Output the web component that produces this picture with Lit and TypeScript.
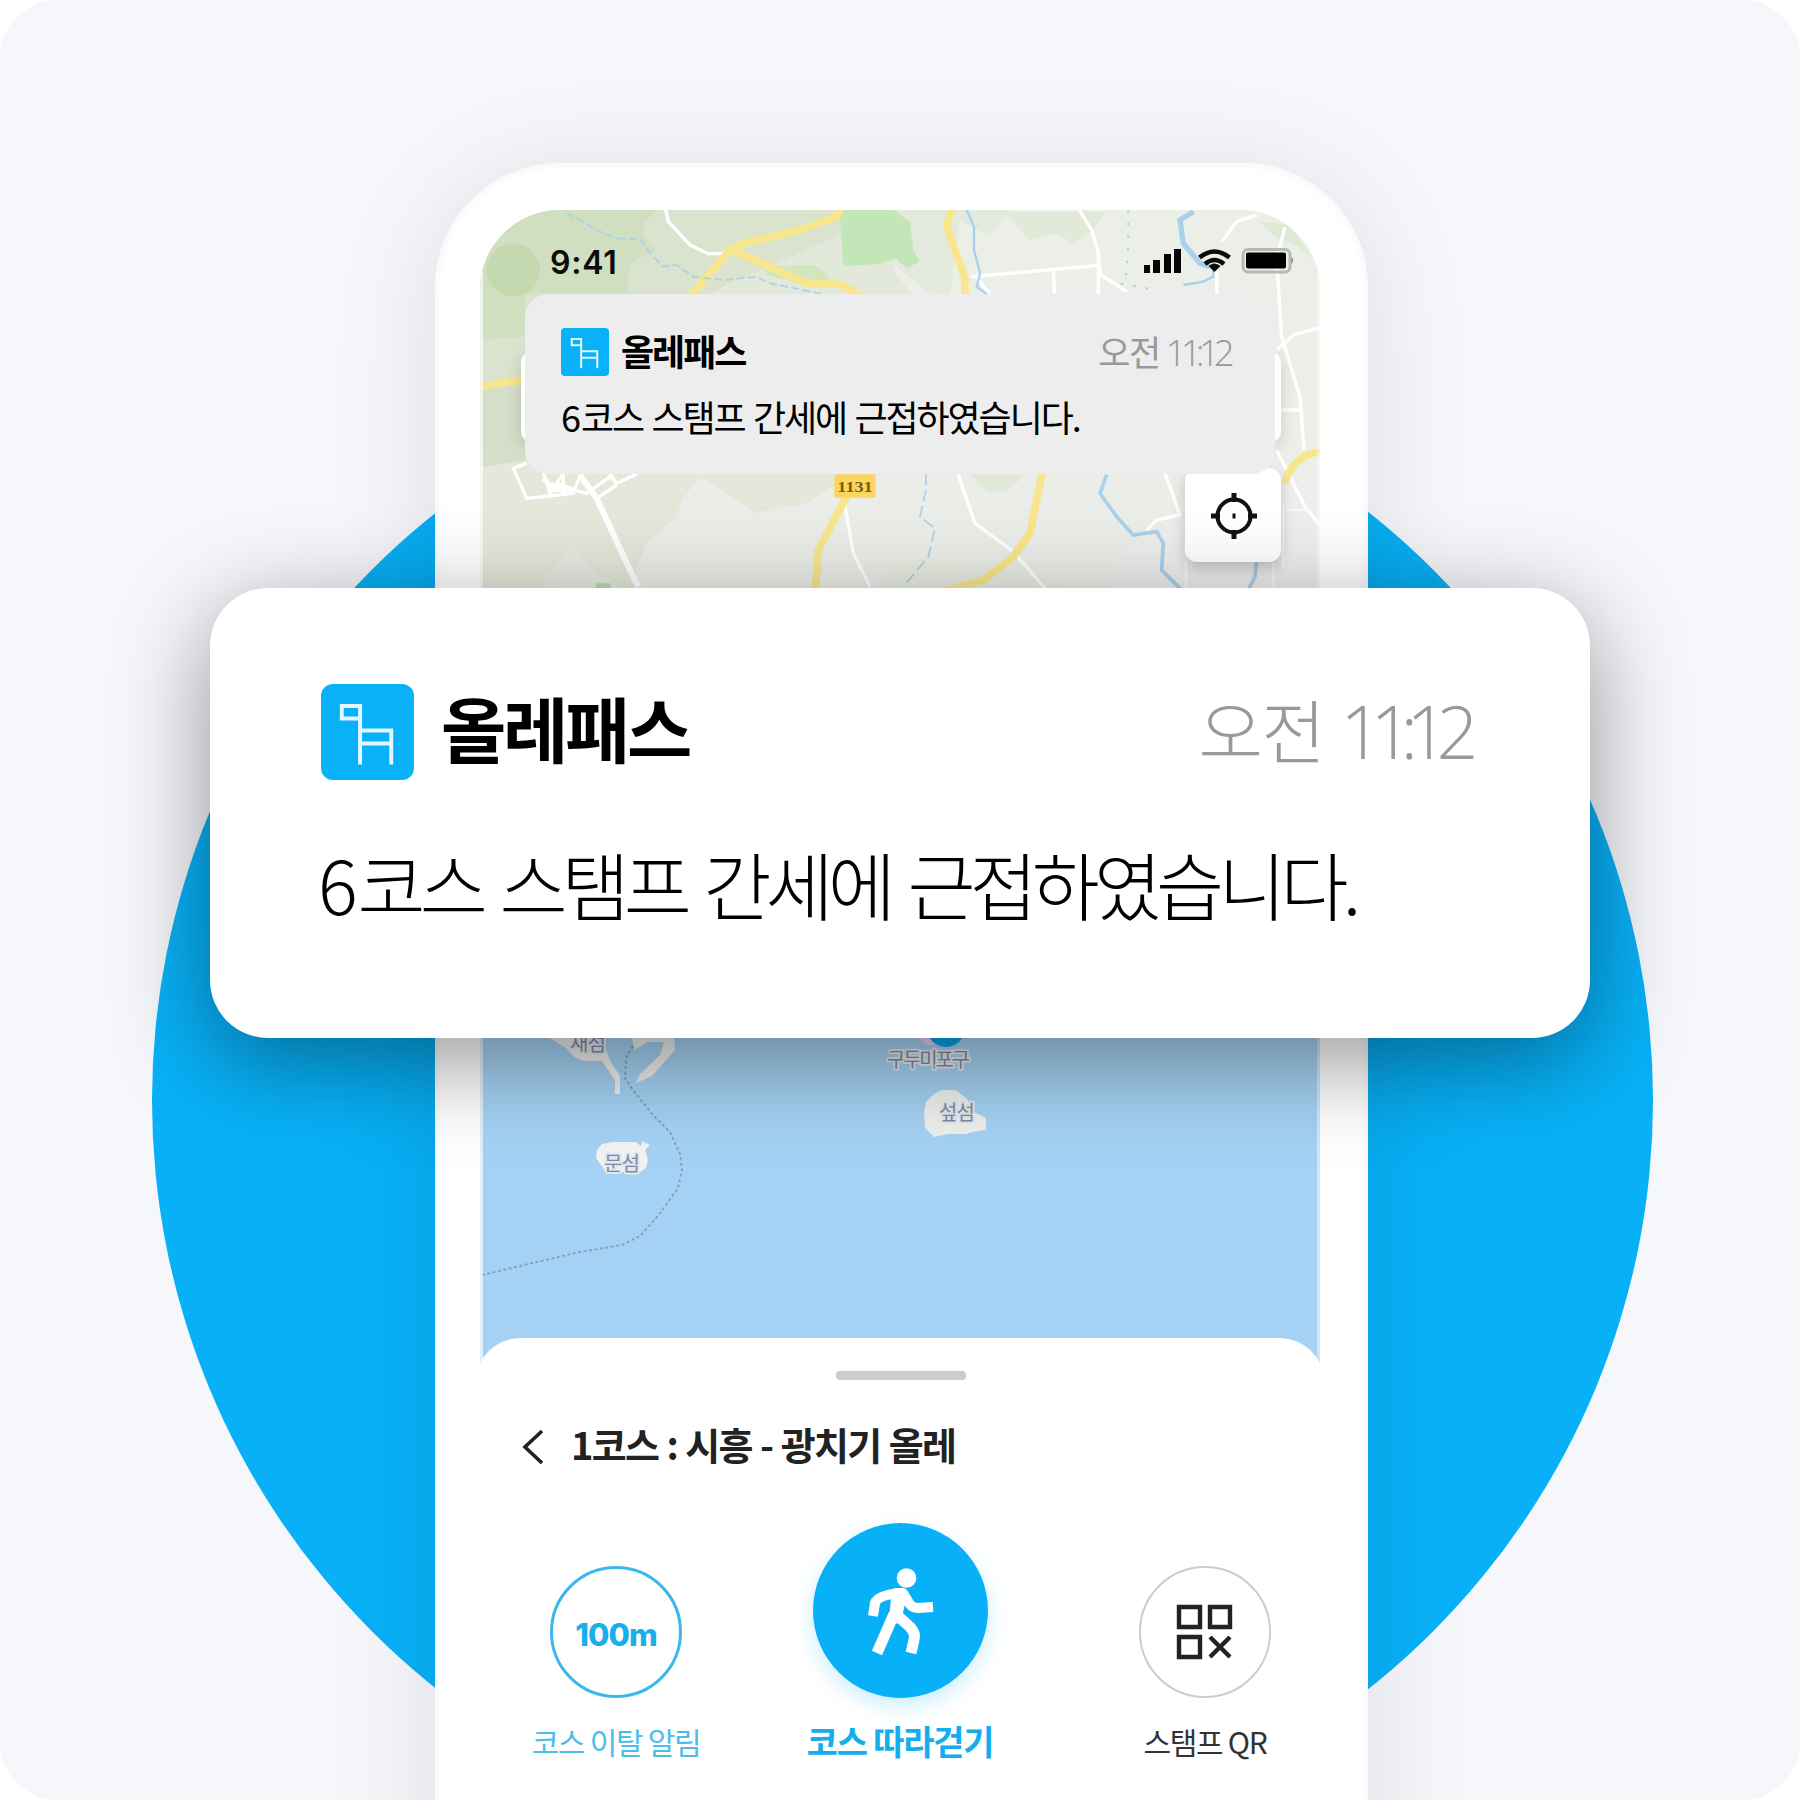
import { LitElement, html, css, svg } from "lit";
import { customElement, property } from "lit/decorators.js";

const chair = html`<svg viewBox="0 0 94 96" preserveAspectRatio="none" fill="none" stroke="#e2f6ff" stroke-width="4">
  <path d="M40 34.500H21V22H40M39.500 20V80.500M39.500 46.500H71V80.500M39.500 59.500H71" />
</svg>`;

@customElement("olle-notice")
export class OlleNotice extends LitElement {
  @property() name = "";
  @property() half = "";
  @property() time = "";
  @property() message = "";

  static styles = css`
    :host { display: block; box-sizing: border-box; color: #000; white-space: nowrap; }
    .head { display: flex; align-items: flex-start; height: var(--icon-h); }
    .icon { width: var(--icon-w); height: var(--icon-h); border-radius: var(--icon-r); background: #08b1f8; flex: none; }
    .icon svg { display: block; width: 100%; height: 100%; }
    .name { font-weight: 700; font-size: var(--name-size); letter-spacing: var(--name-ls); margin: var(--name-top) 0 0 var(--name-gap); line-height: 1; }
    .time { display: flex; align-items: baseline; gap: var(--time-gap); margin: var(--time-top) 0 0 auto; color: #999; font-weight: var(--light); font-size: var(--time-size); letter-spacing: var(--time-ls); line-height: 1; }
    .digits { font-family: "Open Sans", sans-serif; font-weight: 300; font-size: 1.05em; letter-spacing: -.16em; margin-right: .14em; }
    .message { margin: var(--msg-gap) 0 0 var(--msg-left); font-weight: var(--light); font-size: var(--msg-size); letter-spacing: var(--msg-ls); word-spacing: var(--msg-ws); line-height: 1; }
    .message::first-letter { letter-spacing: 0; }
  `;

  render() {
    return html`
      <div class="head">
        <div class="icon">${chair}</div>
        <div class="name">${this.name}</div>
        <div class="time"><span>${this.half}</span><span class="digits">${this.time}</span></div>
      </div>
      <div class="message">${this.message}</div>
    `;
  }
}

@customElement("olle-map")
export class OlleMap extends LitElement {
  static styles = css`
    :host { display: block; }
    svg { display: block; width: 100%; height: 100%; }
    .place { font-family: "Noto Sans CJK KR", sans-serif; font-size: 20px; fill: #7d8ba3; stroke: #e4e8ee; stroke-width: 4px; paint-order: stroke; stroke-linejoin: round; letter-spacing: -1px; }
    .road { font-family: "Liberation Serif", serif; font-weight: 700; font-size: 44px; fill: #7a5c10; }
  `;

  // Land tiles and roads use a grid three times finer than the screen.
  private land() {
    return svg`
      <g transform="translate(430 150) scale(.33333)">
        <rect x="140" y="170" width="2540" height="1500" fill="#e3e8da" />
        <path d="M140 170H1260L1240 300L1000 400L800 460H600L300 520V920L140 950Z" fill="#d9e3cd" />
        <path d="M140 170H690L640 220V260L680 300L600 340L590 430H285V560L150 570Z" fill="#cfdfbf" />
        <circle cx="250" cy="360" r="80" fill="#c4d9b0" />
        <path d="M150 715L285 700V930L160 950Z" fill="#d4dec8" />
        <path d="M900 400L1240 250L1260 300L1420 420L1430 450H800Z" fill="#e2e8da" />
        <path d="M1000 350L1150 345L1190 370L1200 405L1110 400L1010 375Z" fill="#d0e7bd" />
        <path d="M1420 180H2680V1000H1500L1450 440L1390 360Z" fill="#ebefe7" />
        <path d="M1410 180H1740L1680 260L1590 210L1560 430H1500L1400 350Z" fill="#e3e9dc" />
        <path d="M1720 185H2030L1990 240L1930 285L1880 250L1800 270Z" fill="#e3e9d9" />
        <path d="M2490 215L2580 225L2650 330L2600 285L2540 265Z" fill="#dfe8d2" />
        <path d="M1228 170H1380L1440 215L1450 300L1468 335L1430 355L1395 325L1350 342L1240 348Z" fill="#c2e6b7" />
        <path d="M620 1250L650 1180L740 1100L755 1050L810 980L880 1025L980 1090L1060 1065L1110 1070L1210 1010L1400 960H2680V1400H600Z" fill="#ebeee8" />
        <path d="M1620 972H1780Q1740 1040 1670 1025Z" fill="#e2e8d8" />
        <path d="M330 1310L430 1180L470 1240L510 1280L600 1320Z" fill="#e8ebe2" />
        <path d="M500 1300H540L550 1340H490Z" fill="#b9deae" />
        <path d="M2050 1340V1220L2110 1170L2240 1140L2270 970L2540 1000L2680 930V1340Z" fill="#eeeeed" />
        <path d="M1340 1320L1420 1230L1640 1240L2050 1340Z" fill="#e9ede2" />
        <g fill="none" stroke="#fff" stroke-width="10" stroke-linejoin="round">
          <path d="M705 170L715 215L780 285L835 311H890" />
          <path d="M1945 175L1985 240L2005 310L2012 375L2090 425M2005 300V432M1625 380L2008 346M1870 355L1873 430M1640 385L1680 430" />
          <path d="M2375 275L2420 215L2480 195M2565 230L2540 330L2555 560L2570 610L2610 740L2622 900M2560 585L2590 555L2680 530M2540 600L2562 580M2550 780H2610M2540 900L2625 1070L2680 1140M2360 330V440" />
          <path d="M290 940L250 955L290 1045L430 1030L450 975M340 970L360 1030L400 970V1030M350 1000L470 1030L540 980L560 1000L620 972M500 1045L560 1005M540 970L560 1000" />
          <path d="M340 985L375 1020H440M375 1000L430 1020" stroke-width="14" />
          <path d="M450 975L500 1045L600 1260L625 1310" stroke-width="18" />
          <path d="M1240 1040L1270 1210L1320 1310M1585 975L1635 1120L1750 1205L1845 1315M2205 970L2250 1095L2180 1110L2150 1140" />
          <path d="M2268 1110V1320M2530 1240V1330M2560 1060V1250M2570 1080H2640" stroke-width="8" stroke="#f8f8f8" />
        </g>
        <g fill="none" stroke="#f8e68e" stroke-width="23" stroke-linejoin="round">
          <path d="M1235 170L1220 200L1110 240L940 280L900 300L770 450M905 300L1130 400L1230 403L1310 445" />
          <path d="M1567 165L1550 230L1605 385V450M1838 960L1800 1150L1750 1220L1660 1290L1520 1330M2565 1000Q2590 905 2690 905" />
          <path d="M150 710L290 688M1250 1040L1165 1200L1155 1340" />
        </g>
        <g fill="none" stroke="#a9d0ec" stroke-width="7">
          <path d="M410 190L450 210L500 240L560 265L630 268L660 310L700 350L740 345L790 380L880 390L980 380L1020 400L1180 432" stroke-dasharray="24 10" stroke-width="5" />
          <path d="M1610 180L1632 230V300L1650 370L1640 410L1680 440" />
          <path d="M2290 185L2250 210L2260 280L2310 340L2340 350" stroke-width="16" />
          <path d="M2260 405L2320 395L2350 380V340" />
          <path d="M2095 180V270L2090 370L2070 400L2180 420" stroke-dasharray="8 30" stroke-width="6" />
          <path d="M2030 975L2010 1030L2060 1100L2110 1155L2180 1145L2200 1180L2195 1260L2250 1315M2480 1230L2475 1280L2450 1330" stroke-width="11" />
          <path d="M1488 970V1020L1470 1100L1515 1135L1495 1220L1420 1310" stroke-dasharray="35 14" stroke-width="5" />
        </g>
        <rect x="1213" y="973" width="124" height="70" rx="8" fill="#fbd560" />
        <text class="road" x="1222" y="1025" textLength="106" lengthAdjust="spacingAndGlyphs">1131</text>
      </g>`;
  }

  private sea() {
    return svg`
      <rect x="480" y="800" width="840" height="600" fill="#a5d2f4" />
      <path d="M548 1037L566 1048L574 1057L584 1061H602L615 1080V1094H620V1076L611 1062L606 1050L606 1030Z" fill="#edefed" />
      <path d="M631 1030L634 1050L648 1042L664 1042L660 1055L640 1074L636 1083L652 1076L675 1050L674 1030Z" fill="#edefed" />
      <path d="M597 1150L602 1144L612 1142H636L641 1146L642 1141L650 1145L645 1150L648 1160L646 1168L640 1172H606L596 1158Z" fill="#f2f3f2" />
      <path d="M924 1112L926 1102L934 1094L942 1090H956L968 1100L974 1112L986 1118V1130L972 1132L966 1134H948L934 1137L925 1128Z" fill="#eff1ef" />
      <path d="M633 1046L626 1058L625 1078L630 1086L652 1114L670 1132L680 1154L682 1170L678 1188L658 1216L640 1236L622 1245L580 1252L520 1266L482 1275" fill="none" stroke="#7fa0c4" stroke-width="1.800" stroke-dasharray="3 2.500" />
      <circle cx="931" cy="1033" r="12" fill="#e4d6e6" />
      <circle cx="946" cy="1028" r="19" fill="#08a5ea" />
      <text class="place" x="570" y="1051">새섬</text>
      <text class="place" x="604" y="1171">문섬</text>
      <text class="place" x="939" y="1120">섶섬</text>
      <text class="place" x="887" y="1067" textLength="82">구두미포구</text>`;
  }

  render() {
    return html`<svg viewBox="480 210 840 1190">
      ${this.land()} ${this.sea()}
      <rect x="480" y="210" width="3" height="1190" fill="#fff" fill-opacity=".65" />
      <rect x="1317" y="210" width="3" height="1190" fill="#fff" fill-opacity=".45" />
    </svg>`;
  }
}

@customElement("app-root")
export class AppRoot extends LitElement {
  static styles = css`
    :host { display: block; background: #fff; font-family: "Noto Sans CJK KR", "Noto Sans", sans-serif; }
    * { box-sizing: border-box; }
    .board { position: relative; width: 1800px; height: 1800px; overflow: hidden; border-radius: 58px; background: #f5f7fb; display: flex; justify-content: center; align-items: flex-start; }
    .disc { position: absolute; left: 152px; top: 350px; width: 1501px; height: 1501px; border-radius: 50%; background: #08b1f7; }
    .phone { position: relative; width: 933px; height: 1900px; flex: none; margin: 163px 0 0 3px; padding: 47px 48px 0 45px; border-radius: 124px 124px 0 0; background: #fff; box-shadow: 0 14px 110px rgba(20, 20, 30, .11), inset 0 0 12px #f3f3f4; }
    .screen { position: relative; display: flex; flex-direction: column; width: 840px; height: 1590px; overflow: hidden; border-radius: 80px 80px 0 0; }
    .map { position: absolute; left: 0; top: 0; width: 840px; height: 1190px; }
    .status { position: relative; display: flex; align-items: center; height: 84px; padding: 18px 25px 0 70px; }
    .clock { font: 600 32px/1 Inter, sans-serif; letter-spacing: .8px; color: #0b0b0b; padding-top: 4px; }
    .signals { margin-left: auto; display: block; width: 152px; height: 26px; }
    .search { position: absolute; left: 41px; top: 142px; width: 760px; height: 90px; border-radius: 10px; background: #fff; box-shadow: 0 4px 16px rgba(0, 0, 0, .14); }
    .locate { position: absolute; left: 705px; top: 258px; width: 96px; height: 94px; border-radius: 12px; background: #fff; box-shadow: 0 6px 14px rgba(0, 0, 0, .2); display: grid; place-items: center; padding-top: 2px; }
    .small { position: relative; margin: 0 45px; height: 180px; padding: 34px 41px 0 36px; border-radius: 24px; background: #ededed;
      --icon-w: 48px; --icon-h: 48px; --icon-r: 4px; --name-size: 36px; --name-ls: -2px; --name-gap: 12px; --name-top: 4px; --light: 400; --time-size: 35px; --time-ls: -1.500px; --time-gap: 6px; --time-top: 5px; --msg-gap: 22px; --msg-left: 0px; --msg-size: 36px; --msg-ls: -2.100px; --msg-ws: 2.500px; }
    .sheet { position: relative; width: 850px; flex: none; height: 462px; margin: auto -5px 0; border-radius: 46px 46px 0 0; background: #fff; display: flex; flex-direction: column; align-items: center; padding-top: 33px; }
    .grip { width: 130px; height: 9px; border-radius: 4px; margin-left: 1px; background: #ccc; }
    .title { align-self: stretch; display: flex; align-items: center; gap: 27px; height: 40px; margin: 46px 0 0 46px; color: #222; font-size: 38px; font-weight: 700; letter-spacing: -1.700px; word-spacing: 1.300px; line-height: 1; white-space: nowrap; }
    .title span { padding-bottom: 4px; }
    .actions { align-self: stretch; margin: 57px 0 0; padding: 0 0 0 46px; display: flex; align-items: flex-end; }
    .action { display: flex; flex-direction: column; align-items: center; width: 190px; white-space: nowrap; color: #222; }
    .walk { margin: 0 115px 0 94px; }
    .ring { width: 132px; height: 132px; border-radius: 50%; border: 2px solid #ccc; display: grid; place-items: center; }
    .alert .ring { border: 3px solid #3bb7ec; color: #1aaeea; font: 800 31px/1 Inter, sans-serif; letter-spacing: -.900px; padding-top: 5px; }
    .walk .ring { width: 175px; height: 175px; border: 0; background: #08b1f7; box-shadow: 0 8px 20px rgba(8, 177, 247, .22); }
    .label { height: 36px; margin-top: 25px; margin-bottom: 1px; font-size: 30px; line-height: 36px; letter-spacing: -1.300px; }
    .alert .label { color: #4cbdec; }
    .walk .label { color: #14aeee; font-weight: 700; font-size: 34px; letter-spacing: -1.300px; }
    .qr .label { color: #333; }
    .big { position: absolute; left: 210px; top: 588px; width: 1380px; height: 450px; padding: 96px 113px 0 111px; border-radius: 58px; background: #fff; box-shadow: 0 24px 96px rgba(0, 0, 0, .41);
      --icon-w: 93px; --icon-h: 96px; --icon-r: 12px; --name-size: 71px; --name-ls: -3.300px; --name-gap: 27px; --name-top: 7px; --light: 300; --time-size: 70px; --time-ls: -1.500px; --time-gap: 16px; --time-top: 10px; --msg-gap: 66px; --msg-left: -3px; --msg-size: 74px; --msg-ls: -5.900px; --msg-ws: 7px; }
  `;

  private signals() {
    return html`<svg class="signals" viewBox="1142 248 152 26">
      <path d="M1143 265h6v8h-6zM1152 260h7v13h-7zM1163 254h7v19h-7zM1173 249h7v24h-7z" fill="#050505" />
      <g fill="none" stroke="#0a0a0a" stroke-width="4.5">
        <path d="M1198.500 257.500q15-12 30 0M1204 264q9.500-8 19 0" />
      </g>
      <path d="M1213.500 272l-6-6q6-5 12 0z" fill="#0a0a0a" />
      <rect x="1242" y="249.500" width="47" height="22.500" rx="5" fill="none" stroke="#b4bab2" stroke-width="3" />
      <rect x="1245" y="252.500" width="40" height="16" rx="2" />
      <path d="M1290.500 257q3 3.500 0 7z" fill="#777" />
    </svg>`;
  }

  render() {
    const name = "올레패스";
    const half = "오전";
    const time = "11:12";
    const message = "6코스 스탬프 간세에 근접하였습니다.";
    return html`<main class="board">
      <div class="disc"></div>
      <section class="phone">
        <div class="screen">
          <olle-map class="map"></olle-map>
          <div class="search"></div>
          <div class="locate">
            <svg width="48" height="48" viewBox="0 0 48 48" fill="none" stroke="#111" stroke-width="4">
              <circle cx="25" cy="24" r="16.500" />
              <path d="M25 1V10M25 38V47M2 24H11M39 24H48" stroke-width="5" />
              <path d="M25 21.500V26.500" stroke-width="3" />
            </svg>
          </div>
          <div class="status"><span class="clock">9:41</span>${this.signals()}</div>
          <olle-notice class="small" .name=${name} .half=${half} .time=${time} .message=${message}></olle-notice>
          <div class="sheet">
            <div class="grip"></div>
            <div class="title">
              <svg width="23" height="36" viewBox="0 0 23 36" fill="none" stroke="#222" stroke-width="3.6"><path d="M21 3L4 19L21 35" /></svg>
              <span>1코스 : 시흥 - 광치기 올레</span>
            </div>
            <div class="actions">
              <div class="action alert"><div class="ring">100m</div><div class="label">코스 이탈 알림</div></div>
              <div class="action walk">
                <div class="ring">
                  <svg width="68" height="90" viewBox="0 0 68 90" fill="none" stroke="#fff" stroke-linejoin="round">
                    <circle cx="40.500" cy="12" r="9.800" fill="#fff" stroke="none" />
                    <path d="M30 26.500L37 26.500L31 53L28 48Z" fill="#fff" stroke-width="9" />
                    <path d="M34 27Q12 29 9 37L7 50" stroke-width="10" />
                    <path d="M37 27L43 37Q46 42 52 42L67 41" stroke-width="10" />
                    <path d="M28 48L11 87" stroke-width="11" />
                    <path d="M32 50L44 61Q50 67 48 74L45 87" stroke-width="11" />
                  </svg>
                </div>
                <div class="label">코스 따라걷기</div>
              </div>
              <div class="action qr">
                <div class="ring">
                  <svg width="58" height="56" viewBox="0 0 58 56" fill="none" stroke="#222" stroke-width="4.400">
                    <path d="M3 3H24V23H3ZM34 3H54V23H34ZM3 33H24V53H3Z" /><path d="M34 33L54 53M54 33L34 53" />
                  </svg>
                </div>
                <div class="label">스탬프 QR</div>
              </div>
            </div>
          </div>
        </div>
      </section>
      <olle-notice class="big" .name=${name} .half=${half} .time=${time} .message=${message}></olle-notice>
    </main>`;
  }
}
